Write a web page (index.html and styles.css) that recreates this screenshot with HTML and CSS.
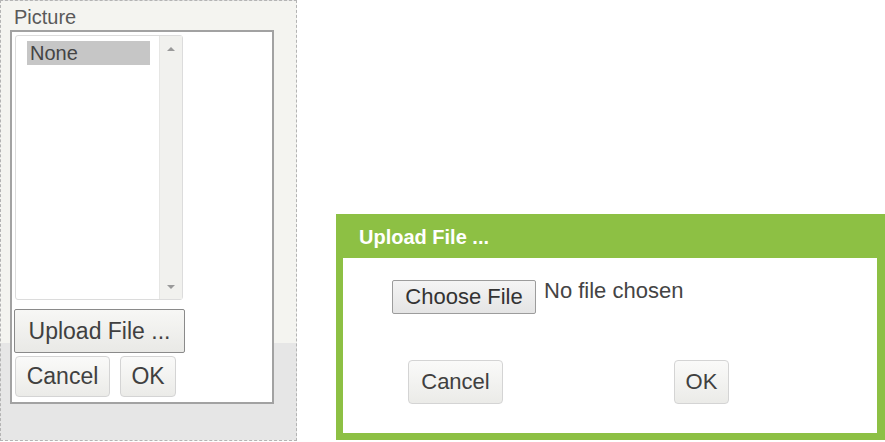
FILE: index.html
```html
<!DOCTYPE html>
<html>
<head>
<meta charset="utf-8">
<link rel="stylesheet" href="styles.css">
</head>
<body>
<div class="page">
  <div class="panel">
    <div class="label">Picture</div>
    <div class="box">
      <div class="listbox">
        <div class="list">
          <div class="item">None</div>
        </div>
        <div class="scroll">
          <span class="arrow up"></span>
          <span class="arrow down"></span>
        </div>
      </div>
      <button class="btn upload">Upload File ...</button>
      <div class="row">
        <button class="btn soft cancel">Cancel</button>
        <button class="btn soft ok">OK</button>
      </div>
    </div>
  </div>
  <div class="dialog">
    <div class="dhead">Upload File ...</div>
    <div class="dbody">
      <div class="filerow">
        <button class="choose">Choose File</button>
        <span class="nofile">No file chosen</span>
      </div>
      <div class="drow">
        <button class="btn soft dcancel">Cancel</button>
        <button class="btn soft dok">OK</button>
      </div>
    </div>
  </div>
</div>
</body>
</html>
```
FILE: styles.css
```css
html, body {
  margin: 0;
  padding: 0;
  background: #ffffff;
  font-family: "Liberation Sans", Arial, sans-serif;
  color: #3a3a3a;
}
.page {
  display: flex;
  align-items: flex-start;
  width: 885px;
  height: 442px;
}
.panel {
  box-sizing: border-box;
  width: 297px;
  height: 441px;
  border: 1px dashed #b4b4b4;
  background: linear-gradient(#f4f4f0 0, #f4f4f0 342px, #e6e6e6 342px);
  display: flex;
  flex-direction: column;
}
.label {
  font-size: 20px;
  color: #5a5a5a;
  padding: 5px 0 0 13px;
  height: 24px;
  line-height: 22px;
}
.box {
  box-sizing: border-box;
  margin-left: 9px;
  width: 264px;
  height: 374px;
  border: 2px solid #a2a2a2;
  background: #fff;
  padding: 3px 0 0 3px;
  display: flex;
  flex-direction: column;
  align-items: flex-start;
}
.listbox {
  box-sizing: border-box;
  width: 168px;
  height: 265px;
  border: 1px solid #dcdcdc;
  border-radius: 3px;
  display: flex;
}
.list {
  flex: 1;
  padding: 5px 0 0 11px;
}
.item {
  width: 120px;
  height: 24px;
  background: #c6c6c6;
  font-size: 20px;
  line-height: 24px;
  padding-left: 3px;
  color: #444;
}
.scroll {
  width: 22px;
  background: #f1f1ee;
  border-left: 1px solid #e6e6e4;
  display: flex;
  flex-direction: column;
  justify-content: space-between;
  align-items: center;
  padding: 11px 0 10px;
}
.arrow {
  width: 0;
  height: 0;
  border-left: 4px solid transparent;
  border-right: 4px solid transparent;
}
.arrow.up { border-bottom: 4px solid #9a9a9a; }
.arrow.down { border-top: 4px solid #9a9a9a; }
.btn {
  font-family: "Liberation Sans", Arial, sans-serif;
  color: #404040;
  padding: 0;
  cursor: default;
}
.upload {
  box-sizing: border-box;
  margin: 9px 0 0 -1px;
  width: 171px;
  height: 44px;
  font-size: 23px;
  border: 1px solid #8a8a8a;
  border-radius: 2px;
  background: linear-gradient(#f7f7f5, #e9e9e6);
}
.row {
  display: flex;
  gap: 10px;
  margin-top: 3px;
}
.soft {
  box-sizing: border-box;
  height: 41px;
  font-size: 23px;
  border: 1px solid #d4d4d4;
  border-radius: 4px;
  background: linear-gradient(#fafaf9, #ebebe8);
}
.cancel { width: 95px; }
.ok { width: 56px; }
.dialog {
  box-sizing: border-box;
  margin: 214px 0 0 39px;
  width: 549px;
  height: 226px;
  background: #8dc044;
  padding: 0 8px 7px 7px;
  display: flex;
  flex-direction: column;
}
.dhead {
  height: 44px;
  line-height: 46px;
  padding-left: 16px;
  color: #fff;
  font-weight: bold;
  font-size: 20px;
  flex: none;
}
.dbody {
  flex: 1;
  background: #fff;
  display: flex;
  flex-direction: column;
}
.filerow {
  display: flex;
  align-items: flex-start;
  margin: 22px 0 0 49px;
  gap: 8px;
}
.choose {
  box-sizing: border-box;
  width: 144px;
  height: 34px;
  font-family: "Liberation Sans", Arial, sans-serif;
  font-size: 22px;
  color: #333;
  border: 1px solid #9c9c9c;
  border-radius: 2px;
  background: linear-gradient(#f4f4f4, #e4e4e4);
  padding: 0;
}
.nofile {
  font-size: 22px;
  color: #444;
  line-height: 22px;
}
.drow {
  display: flex;
  margin: 46px 0 0 65px;
  gap: 171px;
}
.dcancel { width: 95px; height: 44px; font-size: 22px; }
.dok { width: 55px; height: 44px; font-size: 22px; }
```
